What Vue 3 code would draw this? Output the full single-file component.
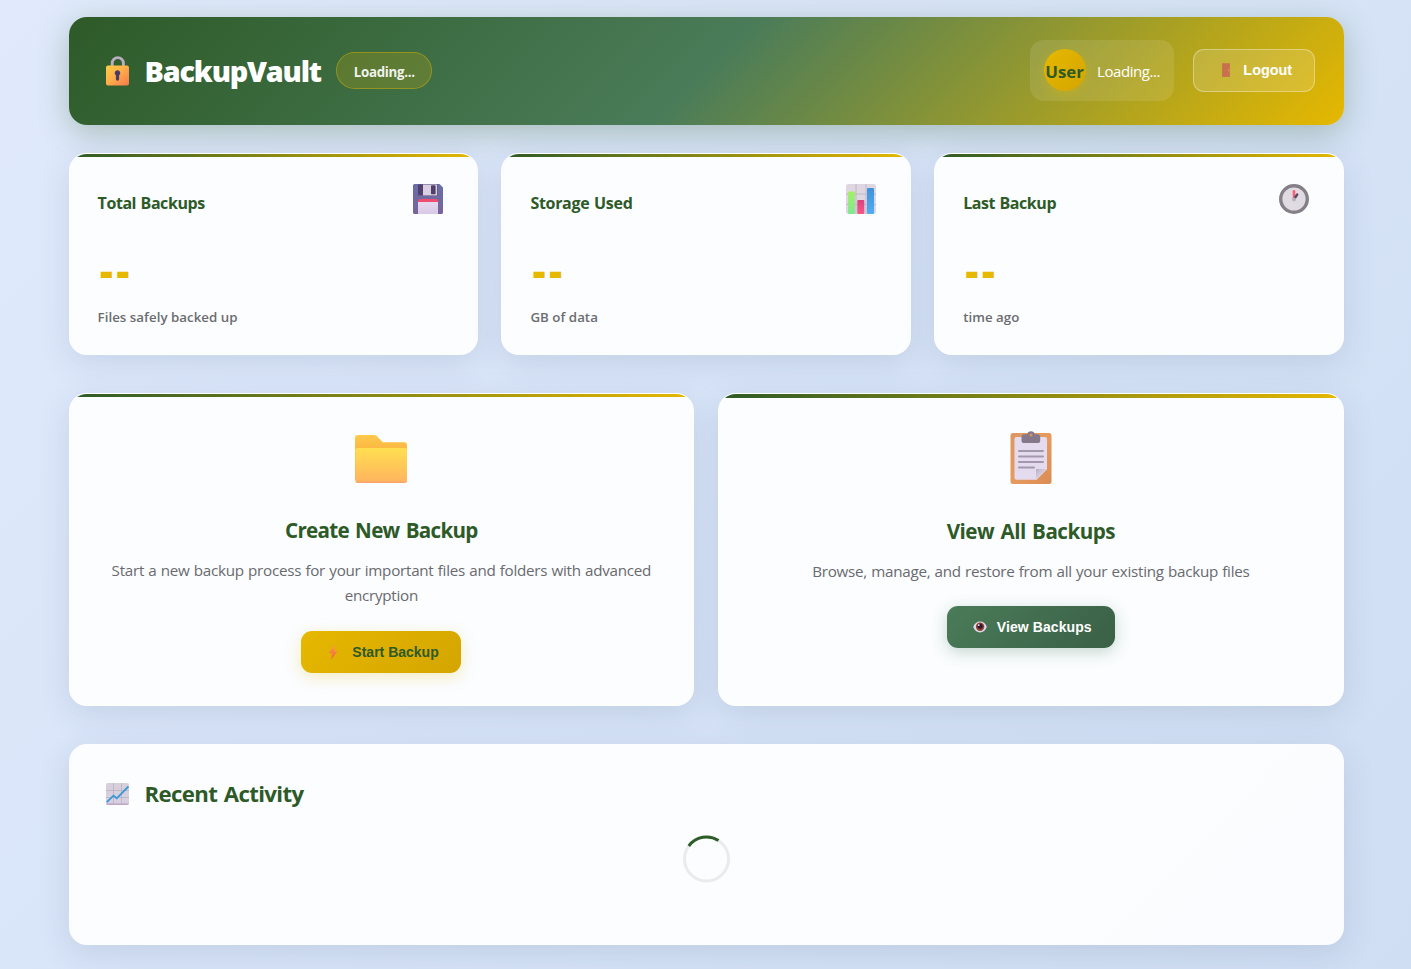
<script setup>
const stats = [
  { id: 'disk', title: 'Total Backups', value: '--', note: 'Files safely backed up' },
  { id: 'chart', title: 'Storage Used', value: '--', note: 'GB of data' },
  { id: 'clock', title: 'Last Backup', value: '--', note: 'time ago' }
]
</script>

<template>
  <div class="page">
    <header class="header">
      <div class="brand">
        <svg class="lock" viewBox="0 0 24 30">
          <defs>
            <linearGradient id="lockBody" x1="0" y1="0" x2="1" y2="1">
              <stop offset="0" stop-color="#ffcd45" /><stop offset=".45" stop-color="#ffb04b" /><stop offset="1" stop-color="#f5794c" />
            </linearGradient>
          </defs>
          <path d="M6.200 13V7.200a5.600 5.600 0 0 1 11.200 0V13" fill="none" stroke="#b9adc0" stroke-width="2.900" />
          <rect x="0" y="9.500" width="23" height="20" rx="2" fill="url(#lockBody)" />
          <path d="M11.500 14.200a2.800 2.800 0 0 0-1.600 5.100v3.800a1.600 1.600 0 0 0 3.200 0v-3.800a2.800 2.800 0 0 0-1.600-5.100z" fill="#4c3b63" />
        </svg>
        <h1>BackupVault</h1>
        <span class="badge">Loading...</span>
      </div>
      <div class="account">
        <div class="user">
          <div class="avatar"><span>User</span></div>
          <span class="user-name">Loading...</span>
        </div>
        <button class="logout">
          <svg class="door" viewBox="0 0 8 14">
            <rect width="8" height="14" rx=".6" fill="#cc774d" />
            <path d="M1 1.500h5.800v3H1zM1 5.600h5v3H1zM1 9.800h5.800v3H1z" fill="#cc6a56" stroke="#bd6350" stroke-width=".4" />
            <circle cx="6.800" cy="7.400" r=".6" fill="#efaa4d" />
          </svg>
          <span>Logout</span>
        </button>
      </div>
    </header>

    <section class="stats">
      <article v-for="s in stats" :key="s.id" class="card stat">
        <h3 :class="s.id">{{ s.title }}</h3>
        <svg v-if="s.id === 'disk'" class="stat-icon" viewBox="0 0 30 30">
          <defs>
            <linearGradient id="diskBody" x1="0" y1="0" x2="0" y2="1"><stop offset="0" stop-color="#6670a8" /><stop offset="1" stop-color="#79629a" /></linearGradient>
            <linearGradient id="diskLabel" x1="0" y1="0" x2="0" y2="1"><stop offset="0" stop-color="#e5d9ee" /><stop offset="1" stop-color="#d9c8e6" /></linearGradient>
          </defs>
          <path d="M1.500 0h25L30 3.500v25a1.500 1.500 0 0 1-1.500 1.500h-27A1.500 1.500 0 0 1 0 28.500v-27A1.500 1.500 0 0 1 1.500 0z" fill="url(#diskBody)" />
          <path d="M5 .6h20V10.500a1.500 1.500 0 0 1-1.500 1.500h-17A1.500 1.500 0 0 1 5 10.500z" fill="#6b5a83" />
          <rect x="5" y=".6" width="5" height="10.400" rx="1" fill="#54406e" />
          <rect x="10" y=".6" width="14" height="10.800" fill="#d8cfe0" />
          <rect x="18" y="1.200" width="4.600" height="9" rx=".8" fill="#513e6b" />
          <path d="M5 16.500a1.500 1.500 0 0 1 1.500-1.500h17a1.500 1.500 0 0 1 1.500 1.500V19H5z" fill="#f04c70" />
          <rect x="5" y="18" width="20" height="12" fill="url(#diskLabel)" />
        </svg>
        <svg v-else-if="s.id === 'chart'" class="stat-icon" viewBox="0 0 30 30">
          <defs>
            <linearGradient id="barGreen" x1="0" y1="0" x2="0" y2="1"><stop offset="0" stop-color="#a6ef68" /><stop offset="1" stop-color="#82e894" /></linearGradient>
            <linearGradient id="barPink" x1="0" y1="0" x2="0" y2="1"><stop offset="0" stop-color="#da4380" /><stop offset="1" stop-color="#f55989" /></linearGradient>
            <linearGradient id="barBlue" x1="0" y1="0" x2="0" y2="1"><stop offset="0" stop-color="#3f91d9" /><stop offset="1" stop-color="#51adf3" /></linearGradient>
          </defs>
          <rect width="30" height="30" rx="2.500" fill="#ded6e1" />
          <path d="M10 0v30M20 0v30M0 10h30M0 20.500h30" stroke="#bdb3c4" stroke-width=".8" />
          <rect x="2" y="7.500" width="7" height="22.500" rx="1" fill="url(#barGreen)" />
          <rect x="11.300" y="16" width="7" height="14" rx="1" fill="url(#barPink)" />
          <rect x="21" y="4" width="7" height="26" rx="1" fill="url(#barBlue)" />
        </svg>
        <svg v-else class="stat-icon" viewBox="0 0 30 30">
          <circle cx="15" cy="15" r="13.300" fill="#e0dbe3" stroke="#858087" stroke-width="3.400" />
          <path d="M15 15.500V7.200" stroke="#f76173" stroke-width="2.600" stroke-linecap="round" />
          <path d="M15.500 14.500l2.700-4" stroke="#584764" stroke-width="2.400" stroke-linecap="round" />
          <circle cx="15" cy="15.600" r="2" fill="#bbb3bd" />
        </svg>
        <div class="value">{{ s.value }}</div>
        <p>{{ s.note }}</p>
      </article>
    </section>

    <section class="actions">
      <article class="card action create">
        <svg class="action-icon" viewBox="0 0 54 54">
          <defs>
            <linearGradient id="folderBack" x1="0" y1="0" x2="0" y2="1"><stop offset="0" stop-color="#ffca4c" /><stop offset=".4" stop-color="#fbb240" /><stop offset="1" stop-color="#f8a557" /></linearGradient>
            <linearGradient id="folderFront" x1="0" y1="0" x2="0" y2="1"><stop offset="0" stop-color="#ffdf50" /><stop offset=".93" stop-color="#ffb65e" /><stop offset="1" stop-color="#f7a16d" /></linearGradient>
          </defs>
          <path d="M1 6a3 3 0 0 1 3-3h16.500a3 3 0 0 1 2 .8l6.400 6.400h21.500a2.600 2.600 0 0 1 2.600 2.600V48H1z" fill="url(#folderBack)" />
          <rect x="1.300" y="16" width="51.700" height="35" rx="2.500" fill="url(#folderFront)" />
        </svg>
        <h2>Create New Backup</h2>
        <p><span class="line">Start a new backup process for your important files and folders with advanced</span> <span class="line">encryption</span></p>
        <button class="btn gold">
          <svg class="bolt" viewBox="0 0 10 15">
            <defs><linearGradient id="boltFill" x1="0" y1="0" x2="0" y2="1"><stop offset="0" stop-color="#fba13d" /><stop offset="1" stop-color="#ef5b4b" /></linearGradient></defs>
            <path d="M5.900.2.800 8.200h3.500L3.200 14.700 9.500 6.200H6.300L7.200.2z" fill="url(#boltFill)" />
          </svg>
          <span>Start Backup</span>
        </button>
      </article>
      <article class="card action view">
        <svg class="action-icon" viewBox="0 0 54 54">
          <defs>
            <linearGradient id="board" x1="0" y1="0" x2="1" y2="1"><stop offset="0" stop-color="#db9762" /><stop offset=".5" stop-color="#e79a5d" /><stop offset="1" stop-color="#d98d55" /></linearGradient>
            <linearGradient id="curl" x1="0" y1="0" x2="1" y2="1"><stop offset="0" stop-color="#b9afc4" /><stop offset=".5" stop-color="#d9d1df" /></linearGradient>
          </defs>
          <rect x="6.500" y="2" width="41" height="51" rx="2.500" fill="url(#board)" />
          <path d="M12.500 6h28.500a2 2 0 0 1 2 2V38L32.500 48.700H12.500a2 2 0 0 1-2-2V8a2 2 0 0 1 2-2z" fill="#e5dbef" />
          <path d="M32 38h11.200L32 49.200z" fill="url(#curl)" />
          <path d="M23.200 3.200a3.900 3.900 0 0 1 7.600 0H33.500A2.700 2.700 0 0 1 36.200 5.900V10a2 2 0 0 1-2 2H19.500a2 2 0 0 1-2-2V5.900a2.700 2.700 0 0 1 2.700-2.700z" fill="#85788a" />
          <circle cx="27" cy="4" r="1.500" fill="#dd8f5c" />
          <path d="M15 20h24M15 25.500h24M15 31h24M15 36.500h15" stroke="#a397ae" stroke-width="2" stroke-linecap="round" />
        </svg>
        <h2>View All Backups</h2>
        <p><span class="line">Browse, manage, and restore from all your existing backup files</span></p>
        <button class="btn green">
          <svg class="eye" viewBox="0 0 14 12">
            <path d="M.2 6.100C1.600 2.500 4 .6 7 .6s5.400 1.900 6.800 5.200C12.500 9.500 10 11.400 7 11.400S1.500 9.600.2 6.100z" fill="#e2d9ea" />
            <circle cx="7.100" cy="5.700" r="4.200" fill="#8d4238" /><circle cx="7.100" cy="5.300" r="2.500" fill="#34152c" /><circle cx="5.800" cy="4.100" r=".9" fill="#fff" />
          </svg>
          <span>View Backups</span>
        </button>
      </article>
    </section>

    <section class="activity">
      <div class="activity-title">
        <svg class="trend" viewBox="0 0 23 22">
          <defs><linearGradient id="trendBg" x1="0" y1="0" x2="0" y2="1"><stop offset="0" stop-color="#d6d0d9" /><stop offset=".88" stop-color="#d9cfe2" /><stop offset="1" stop-color="#b59fc2" /></linearGradient></defs>
          <rect width="23" height="22" rx="1.800" fill="url(#trendBg)" />
          <path d="M7.500 0v21M15.500 0v21M0 7.500h23M0 14.500h23" stroke="#b8aebe" stroke-width=".7" />
          <path d="M.8 19.200 7.500 12.600l3.200 2.700L22.500 3.400" fill="none" stroke="#3699d8" stroke-width="1.800" />
        </svg>
        <h2>Recent Activity</h2>
      </div>
      <svg class="spinner" viewBox="0 0 48 48">
        <circle cx="24" cy="24" r="22" fill="none" stroke="#e8ecea" stroke-width="3" />
        <path d="M6.300 11A22 22 0 0 1 36 5.500" fill="none" stroke="#2d5e27" stroke-width="3" />
      </svg>
    </section>
  </div>
</template>

<style>
body { background: #d8e4f7; }
</style>

<style scoped>
* { box-sizing: border-box; }
h1, h2, h3, p { margin: 0; white-space: nowrap; }
svg { display: block; flex: none; }
button { font-family: "Liberation Sans", Arial, sans-serif; font-weight: 700; white-space: nowrap; }
.page {
  height: 969px;
  overflow: hidden;
  padding: 17px 67.400px 0 68.600px;
  background: linear-gradient(135deg, #e0eafc 0%, #cfdef3 100%);
  font-family: "Open Sans", "Noto Sans", sans-serif;
}
.header {
  height: 108px;
  padding: 0 29px 0 37px;
  display: flex;
  align-items: center;
  justify-content: space-between;
  border-radius: 18px;
  background: linear-gradient(135deg, #2d5a27 0%, #4a7c59 50%, #e6b800 100%);
  box-shadow: 0 8px 32px rgba(45, 90, 39, .3);
}
.brand, .account { display: flex; align-items: center; }
.account { margin-top: -1.200px; }
.lock { width: 24px; height: 30px; margin-top: 0; }
h1 { margin-left: 15px; width: 177px; font-size: 28.800px; line-height: 40px; font-weight: 800; letter-spacing: -1.200px; color: #fff; }
.badge {
  width: 96px; height: 37px; margin-left: 14.600px; margin-top: -1px;
  display: flex; align-items: center; justify-content: center;
  border: 1px solid rgba(230, 184, 0, .4); border-radius: 19px;
  background: rgba(230, 184, 0, .2);
  color: rgba(255, 255, 255, .93); font-size: 13.300px; font-weight: 700; letter-spacing: -.3px; padding-top: 2px;
}
.user { width: 144px; height: 61px; margin-right: 19px; padding: 0 14px; display: flex; align-items: center; border-radius: 14px; background: rgba(255, 255, 255, .1); }
.avatar { flex: none; width: 42px; height: 42px; padding-top: 2px; display: flex; align-items: center; justify-content: center; border-radius: 50%; background: linear-gradient(135deg, #e6b800, #d4a500); box-shadow: 0 4px 12px rgba(230, 184, 0, .3); color: #2d5a27; font-size: 16.800px; font-weight: 700; }
.user-name { margin-left: 11.500px; padding-top: 2px; color: #fff; font-size: 15px; letter-spacing: -.45px; }
.logout { width: 122px; height: 43px; padding: 0 21.500px 0 28px; display: flex; align-items: center; justify-content: space-between; border: 1px solid rgba(255, 255, 255, .35); border-radius: 11px; background: rgba(255, 255, 255, .15); color: #fff; font-size: 14.400px; }
.door { width: 8px; height: 14px; opacity: .9; }
.card, .activity { border-radius: 18px; background: rgba(253, 254, 255, .94); box-shadow: 0 8px 32px rgba(45, 70, 110, .13); }
.card { position: relative; overflow: hidden; border: 1px solid rgba(255, 255, 255, .6); }
.card::before { content: ""; position: absolute; inset: 0 0 auto; height: 3px; background: linear-gradient(90deg, #2d5a27, #e6b800); }
.stats { display: grid; grid-template-columns: repeat(3, 1fr); gap: 23.400px; margin-top: 28px; }
.stat { height: 202px; padding: 28px; display: grid; grid-template-columns: 1fr 30px; grid-template-rows: 62px 56px 30px; }
.stat h3 { padding-top: 9px; line-height: 24px; font-size: 16px; font-weight: 700; letter-spacing: -.44px; word-spacing: .8px; color: #2d5a27; }
.stat h3.chart { letter-spacing: -.3px; }
.stat-icon { width: 30px; height: 30px; margin: 2px 0 0 -6px; }
.value { grid-column: 1 / 3; padding-left: 2.400px; line-height: 53px; font-size: 40px; font-weight: 800; letter-spacing: 3.800px; color: #e6b800; }
.stat p { grid-column: 1 / 3; line-height: 34px; font-size: 13.300px; font-weight: 600; letter-spacing: .03px; color: #6c6c70; }
.actions { display: grid; grid-template-columns: 1fr 1fr; gap: 24px; margin-top: 38px; }
.action { height: 313px; padding-top: 38px; display: flex; flex-direction: column; align-items: center; }
.action.view { padding-top: 37px; }
.action.view::before { height: 4px; }
.action-icon { width: 54px; height: 54px; }
.action h2 { margin-top: 28px; line-height: 32px; font-size: 20.600px; font-weight: 700; letter-spacing: -.7px; word-spacing: 1.500px; color: #2d5a27; }
.action.view h2 { margin-top: 30px; letter-spacing: -.5px; }
.action p { margin-top: 12px; text-align: center; font-size: 15.200px; line-height: 25px; letter-spacing: -.26px; word-spacing: .55px; color: #6a6a6e; }
.line { display: block; }
.btn { height: 42px; display: flex; align-items: center; border: 0; border-radius: 11px; font-size: 14px; }
.gold { width: 160px; margin-top: 23px; padding-left: 27px; color: #2d5a27; background: linear-gradient(135deg, #e6b800, #d4a500); box-shadow: 0 4px 16px rgba(230, 184, 0, .25); }
.gold span { margin-left: 14px; }
.green { width: 168px; margin-top: 22px; padding-left: 26px; color: #fff; background: linear-gradient(135deg, #4a7c59, #3a5f45); box-shadow: 0 4px 16px rgba(74, 124, 89, .3); }
.green span { margin-left: 10px; letter-spacing: .08px; }
.bolt { width: 10px; height: 15px; }
.eye { width: 14px; height: 12px; }
.activity { height: 201px; margin-top: 38px; padding: 30px 37px; }
.activity-title { height: 40px; display: flex; align-items: center; }
.trend { width: 23px; height: 22px; }
.activity h2 { margin-left: 16px; font-size: 22.200px; line-height: 40px; font-weight: 700; letter-spacing: -.65px; word-spacing: 1.500px; color: #2d5a27; }
.spinner { width: 48px; height: 48px; margin: 21px auto 0; transform: translateX(.5px); }
</style>
